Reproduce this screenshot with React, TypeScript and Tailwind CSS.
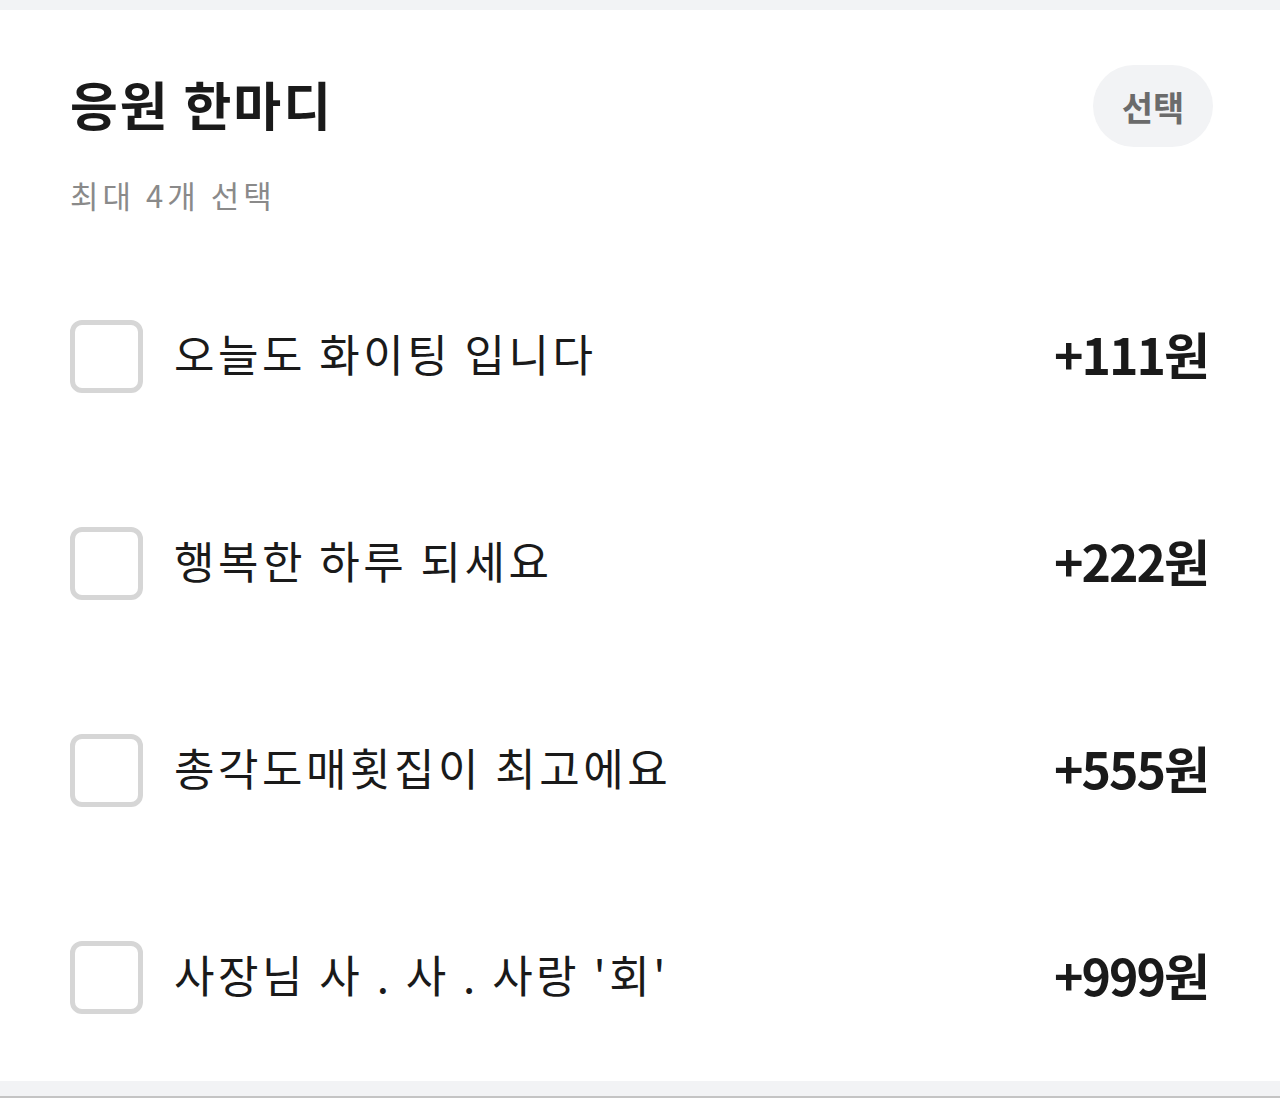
import React from "react";

interface Cheer {
  text: string;
  price: number;
}

const cheers: Cheer[] = [
  { text: "오늘도 화이팅 입니다", price: 111 },
  { text: "행복한 하루 되세요", price: 222 },
  { text: "총각도매횟집이 최고에요", price: 555 },
  { text: "사장님 사 . 사 . 사랑 '회'", price: 999 },
];

const font = {
  fontFamily: '"Noto Sans CJK KR", "Noto Sans", sans-serif',
};

export default function App() {
  return (
    <div className="min-h-[1098px] w-[1280px] bg-[#f2f3f5]" style={font}>
      <div className="h-[10px]" />
      <section className="bg-white pt-[55px] pl-[70px] pr-[67px]">
        <div className="flex h-[82px] items-center justify-between">
          <h2 className="pb-[4px] text-[52px] font-bold leading-none tracking-[2px] text-[#1a1a1a]">
            응원 한마디
          </h2>
          <button className="flex h-[82px] w-[120px] items-center justify-center rounded-full bg-[#f2f3f5] text-[34px] font-bold text-[#6b6b6b]">
            선택
          </button>
        </div>
        <p className="mt-[28px] h-[40px] text-[31px] leading-[40px] tracking-[4px] text-[#8a8a8a]">
          최대 4개 선택
        </p>
        <ul className="mt-[38px]">
          {cheers.map((cheer) => (
            <li key={cheer.price} className="flex h-[207px] items-center">
              <span className="h-[73px] w-[73px] shrink-0 rounded-[12px] border-[5px] border-[#d6d6d6]" />
              <span className="ml-[31px] flex-1 pb-[8px] text-[44px] leading-none tracking-[3.5px] text-[#1a1a1a]">
                {cheer.text}
              </span>
              <span className="pb-[8px] pr-[5px] text-[50px] font-bold leading-none tracking-[-2px] text-[#1a1a1a]">
                +{cheer.price}원
              </span>
            </li>
          ))}
        </ul>
      </section>
      <div className="h-[15px]" />
      <div className="h-[2px] bg-[#c4c4c4]" />
    </div>
  );
}
